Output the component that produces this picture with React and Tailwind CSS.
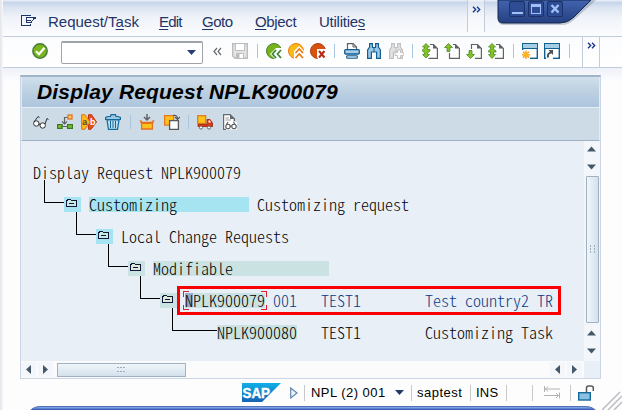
import React from "react";

const ui = "font-['Liberation_Sans',Arial,sans-serif]";

function Icon({ w = 16, h = 16, children, className = "" }) {
  return (
    <svg width={w} height={h} viewBox={`0 0 ${w} ${h}`} fill="none" className={`shrink-0 ${className}`}>
      {children}
    </svg>
  );
}

function Sep({ className = "" }) {
  return <div className={`h-[14px] w-px shrink-0 bg-[#a9c6e0] ${className}`} />;
}

/* Half-width Latin text, one cell is 8px wide */
function Mono({ text, cells, className = "", children }) {
  return (
    <div
      className={`h-4 shrink-0 whitespace-pre font-['Noto_Sans_CJK_JP','Liberation_Mono',monospace] text-[16px] leading-[14px] font-light [font-variant-ligatures:none] [font-feature-settings:'hwid','liga'_0] ${className}`}
      style={{ width: (cells ?? text.length) * 8 }}
    >
      {children ?? text}
    </div>
  );
}

function Folder({ className = "" }) {
  return (
    <div className={`h-[15px] w-[17px] shrink-0 ${className}`}>
      <svg width="17" height="15" viewBox="0 0 17 15" fill="none" shapeRendering="crispEdges">
        <path d="M2.500 9.500V3.500H3.500V2.500H6.500L7.500 3.500H12.500V9.500Z" fill="#e9efd6" fillOpacity=".5" stroke="#15153a" />
        <path d="M5 6.500H10" stroke="#15153a" />
      </svg>
    </div>
  );
}

function Branch({ className }) {
  return <div className={`h-[23px] shrink-0 border-b border-l border-black ${className}`} />;
}

function Arrow({ dir }) {
  const d = {
    up: "M3.5 10L8 5L12.500 10Z",
    down: "M3.5 6L8 11L12.500 6Z",
    left: "M10.500 3.5L5.500 8L10.500 12.500Z",
    right: "M5.500 3.5L10.500 8L5.500 12.500Z",
  }[dir];
  return (
    <div className="size-[15px] shrink-0 bg-[#f3f6fa]">
      <Icon w={15} h={15}>
        <path d={d} fill="#465868" transform="translate(-.5 -.5)" />
      </Icon>
    </div>
  );
}

function PageIcon({ kind }) {
  const arrow = {
    first: "M4 .5L7.500 4H5.500V6.500H8V8L5.500 10V11.500H7.500L4 15L.5 11.500H2.500V10L.5 8V7L2.500 5V4H.5Z",
    prev: "M4.500 .5L8.500 4.500H6V8.500H3V4.500H.5Z",
    next: "M4.500 15.500L8.500 11.500H6V7.500H3V11.500H.5Z",
    last: "M4 .5L7.500 4H5.500V6L8 8V9H5.500V11.500H7.500L4 15.500L.5 11.500H2.500V9H.5V8L2.500 6V4H.5Z",
  }[kind];
  const page = {
    first: "M8 1.500H11.500L15.400 5.400V15.400H6.500",
    prev: "M9 1.500H11.500L15.400 5.400V15.400H5.500V10",
    next: "M5.500 6V1.500H11.500L15.400 5.400V15.400H9",
    last: "M8 1.500H11.500L15.400 5.400V15.400H7",
  }[kind];
  return (
    <Icon>
      <path d={page} stroke="#5f6368" strokeWidth="1.200" />
      <path d="M11 1V5.500H15.500Z" fill="#5f6368" />
      <path d={arrow} fill="#84c225" stroke="#4b8a24" strokeWidth=".8" />
    </Icon>
  );
}

function Binoculars({ stroke, fill, plus }) {
  return (
    <Icon>
      <path
        d="M3.600 .6H6.400V4.500H9.600V.6H12.400V4L14.400 7V15.400H10.600V9H5.400V15.400H1.600V7L3.600 4Z"
        fill={fill}
        stroke={stroke}
        strokeWidth="1.200"
      />
      <path d="M8 4.500V9" stroke={stroke} />
      {plus && <path d="M9.500 7H12.500V9.500H15.300V12.500H12.500V15.300H9.500V12.500H7V9.500H9.500Z" fill="#fff" stroke={stroke} />}
    </Icon>
  );
}

function MenuBar() {
  return (
    <div className="flex h-[37px] shrink-0 border-b border-[#c3ccdf] bg-[linear-gradient(#e4ecf8_0px,#e4ecf8_1px,#c5d4e9_2px,#dce5f2_8px,#f0f3f9_18px,#fbfcfe_36px)] text-[15px] leading-[18px] text-[#1f3468]">
      <div className="flex w-[467px] pt-[13px] pl-[21px]">
        <Icon w={16} h={14} className="mt-px">
          <path d="M9.500 2V1.500H.500V11.500H9.500V9.500M4.500 3.500H14.500V4.500H13L10 8.500H5.500V3.500M6 6.500H10" stroke="#1f3468" shapeRendering="crispEdges" />
        </Icon>
        <div className="ml-[11px] w-[111px]">Request/T<u className="underline-offset-2">a</u>sk</div>
        <div className="w-[43px] tracking-[-.8px]"><u className="underline-offset-2">E</u>dit</div>
        <div className="w-[53px] tracking-[-.5px]"><u className="underline-offset-2">G</u>oto</div>
        <div className="w-[63px] tracking-[-.35px]"><u className="underline-offset-2">O</u>bject</div>
        <div className="ml-px tracking-[-.25px]">Utilitie<u className="underline-offset-2">s</u></div>
      </div>
      <div className="h-8 w-[18px] shrink-0 border-x border-[#c3ccda] bg-[#ffffff60] pt-[6px] pl-[3px]">
        <Icon w={10} h={7} className="ml-px">
          <path d="M1 .7L3.7 3.5L1 6.3M5 .7L7.7 3.5L5 6.3" stroke="#1d3a8c" strokeWidth="1.4" />
        </Icon>
      </div>
      <svg width="108" height="30" viewBox="0 0 108 30" className="ml-[9px] shrink-0">
        <defs>
          <linearGradient id="cap" x1="0" y1="0" x2="0" y2="1">
            <stop offset="0" stopColor="#4263ae" />
            <stop offset="1" stopColor="#244081" />
          </linearGradient>
        </defs>
        <path d="M4 0V19Q4 25 10 25H68Q75 25 81 19L102 0Z" fill="#66758c" opacity=".35" />
        <path d="M4 0V18Q4 23 9 23H66Q74 23 80 17L97 0Z" fill="url(#cap)" stroke="#152650" />
        <g fill="#2e4c94" stroke="#1a3268">
          <rect x="15.500" y="1.500" width="15" height="15" rx="1.500" />
          <rect x="34.500" y="1.500" width="15" height="15" rx="1.500" />
          <rect x="53.500" y="1.500" width="15" height="15" rx="1.500" />
        </g>
        <g stroke="#a3c0fa" fill="none">
          <path d="M18 13H29" strokeWidth="2" />
          <rect x="37.500" y="4.500" width="9" height="9" />
          <path d="M37 5.500H47" strokeWidth="3" />
          <path d="M57.500 5L64.500 12.500M64.500 5L57.500 12.500" strokeWidth="2.400" />
        </g>
      </svg>
    </div>
  );
}

function StandardToolbar() {
  return (
    <div className="flex h-[31px] shrink-0 items-center border-b border-[#c3ccdf] bg-[linear-gradient(#fbfcfe,#ffffff)] pl-8">
      <Icon className="-mt-0.5">
        <circle cx="8" cy="8" r="7.2" fill="#7ab51d" stroke="#477a38" strokeWidth="1.4" />
        <path d="M4 8.300L7 11.200L12.500 4.800" stroke="#fff" strokeWidth="2.200" />
      </Icon>
      <div className="ml-[13px] flex h-[23px] w-[142px] shrink-0 items-center justify-end rounded-[2px] border border-t-2 border-[#a0a4aa] bg-white pr-1.5">
        <Icon w={9} h={5}><path d="M0 0H9L4.500 5Z" fill="#243d78" /></Icon>
      </div>
      <Icon w={9} h={9} className="-mt-0.5 ml-[10px]">
        <path d="M4 1L1 4.500L4 8M8 1L5 4.500L8 8" stroke="#666a70" strokeWidth="1.200" />
      </Icon>
      <div className="-mt-0.5 flex items-center">
        <Icon className="ml-[10px]">
          <path d="M.7 .7H15.300V15.300H3L.7 13Z" fill="#e4e4e4" stroke="#bdbdbd" strokeWidth="1.400" />
          <path d="M3.500 1V7.500H12.500V1" fill="#fff" stroke="#bdbdbd" />
          <path d="M4.500 15V10.500H11.500V15" fill="#fff" stroke="#bdbdbd" />
          <path d="M5 11H7.500V15H5Z" fill="#bdbdbd" />
        </Icon>
        <Sep className="ml-[9px]" />
        <Icon className="ml-2">
          <circle cx="8" cy="8" r="7.500" fill="#76b31c" stroke="#4d802f" />
          <path d="M16 5H10L4 11L9 16H16Z" fill="#fff" />
          <path d="M10 7L6.500 11L10 15M15 7L11.500 11L15 15" stroke="#3d8731" strokeWidth="1.800" />
        </Icon>
        <Icon className="ml-1.5">
          <circle cx="8" cy="8" r="7.500" fill="#fdb913" stroke="#e97b16" />
          <path d="M11 3L6 8V16H16V8Z" fill="#fff" />
          <path d="M7.500 10L11.300 6L15 10M7.500 15L11.300 11L15 15" stroke="#e97b16" strokeWidth="1.800" />
        </Icon>
        <Icon className="ml-1.5">
          <circle cx="8" cy="8" r="7.500" fill="#d8520e" stroke="#b23b17" />
          <path d="M7 6H16V16H8L7 14Z" fill="#fff" />
          <path d="M9 8L14.500 14.500M14.500 8L9 14.500" stroke="#b82712" strokeWidth="2" />
        </Icon>
        <Sep className="ml-2" />
        <Icon className="ml-[9px]">
          <path d="M3.500 6V.6H9L12.500 4V7" fill="#fff" stroke="#5f6368" strokeWidth="1.200" />
          <path d="M9 .5V4H12.500" stroke="#5f6368" />
          <rect x=".700" y="6.700" width="14.600" height="4.300" rx="1" fill="#a6cfea" stroke="#12598c" strokeWidth="1.300" />
          <rect x="2.700" y="12.800" width="10.600" height="2.500" rx=".700" fill="#c4e2f3" stroke="#12598c" strokeWidth="1.100" />
        </Icon>
        <div className="ml-1.5 flex gap-1.5">
          <Binoculars stroke="#145f94" fill="#9cc9e6" />
          <Binoculars stroke="#c2c2c2" fill="#e2e2e2" plus />
        </div>
        <Sep className="ml-2" />
        <div className="ml-[9px] flex gap-1.5">
          <PageIcon kind="first" />
          <PageIcon kind="prev" />
          <PageIcon kind="next" />
          <PageIcon kind="last" />
        </div>
        <Sep className="ml-[9px]" />
        <div className="ml-2 flex gap-1.5">
          <Icon>
            <rect x=".700" y=".700" width="14.600" height="14.600" fill="#fff" stroke="#11618f" strokeWidth="1.400" />
            <path d="M1 1H15V5H1Z" fill="#a6cde3" /><path d="M0 5.500H16" stroke="#11618f" />
            <path d="M0 7H8V16H0Z" fill="#fff" />
            <path d="M4 7.500V16M0 11.800H8.300M1 8.800L7 14.800M7 8.800L1 14.800" stroke="#f79419" strokeWidth="1.300" />
            <circle cx="4" cy="11.800" r="2.500" fill="#fbb618" />
          </Icon>
          <Icon>
            <rect x=".700" y=".700" width="14.600" height="14.600" fill="#fff" stroke="#11618f" strokeWidth="1.400" />
            <path d="M1 1H15V5H1Z" fill="#a6cde3" /><path d="M0 5.500H16" stroke="#11618f" />
            <path d="M3 8H9V16H2Z" fill="#fff" />
            <path d="M4 14.500Q3 10 7.500 9.500" stroke="#4a4e52" strokeWidth="2" /><path d="M4.500 7H9V12Z" fill="#4a4e52" />
          </Icon>
        </div>
        <Sep className="ml-[9px]" />
      </div>
      <div className="ml-3 h-[30px] w-[18px] shrink-0 border-x border-[#c3ccda] pt-[5px] pl-1">
        <Icon w={10} h={7}>
          <path d="M1 .7L3.700 3.500L1 6.300M5 .7L7.700 3.500L5 6.300" stroke="#1d3a8c" strokeWidth="1.400" />
        </Icon>
      </div>
    </div>
  );
}

function AppToolbar() {
  return (
    <div className="flex h-[34px] shrink-0 items-start border border-t-[#e6eef5] border-r-[#e4edf4] border-b-[#9fb1c4] border-l-[#e4edf4] bg-[#cddbe6] pt-[6px] pl-[11px]">
      <Icon>
        <g stroke="#1c1c1c" fill="#fff" strokeWidth=".9">
          <circle cx="3.300" cy="9.500" r="2.700" /><circle cx="9.700" cy="11.500" r="2.700" />
          <path d="M1 8L5 2.500L6.500 3.500M5.800 10L7.200 10.500M12 10L14 4.500L15.500 5.500" fill="none" />
        </g>
      </Icon>
      <Icon className="ml-2">
        <path d="M10.500 3.500H7.500V10M5 7.500L7.500 10L10 7.500" stroke="#5f6368" strokeWidth="1.200" />
        <rect x="11" y="1" width="4" height="4" fill="#fcd068" stroke="#e26a12" strokeWidth="1.200" />
        <path d="M5 12.500H11" stroke="#5f6368" />
        <rect x=".600" y="10.600" width="4.500" height="3.800" fill="#80bd2b" stroke="#397a29" strokeWidth="1.200" />
        <rect x="10.600" y="10.600" width="4.800" height="3.800" fill="#80bd2b" stroke="#397a29" strokeWidth="1.200" />
      </Icon>
      <Icon className="ml-2">
        <path d="M7.500 .7H10.500L15.500 8L10 15.300H7.500Z" fill="#e94e1b" stroke="#ba3517" />
        <path d="M.6 .7H4L9 8L4 15.300H.6Z" fill="#fcb81c" stroke="#e5761b" />
        <text x="1.300" y="11" fontSize="9" fontWeight="bold" fill="#5a4c22" fontFamily="Liberation Sans">a</text>
        <text x="9" y="11" fontSize="9" fontWeight="bold" fill="#fff" fontFamily="Liberation Sans">b</text>
      </Icon>
      <Icon className="ml-2">
        <path d="M2 6H14L12.500 15.300H3.500Z" fill="#b9dff2" stroke="#17689a" strokeWidth="1.200" />
        <path d="M.6 5.500V3.500L3 2.500H5.500L6 .6H10.500L11 2.500H13L15.400 3.500V5.500Z" fill="#9bc9e3" stroke="#17689a" strokeWidth="1.200" />
        <path d="M5.500 7V14M8 7V14M10.500 7V14" stroke="#17689a" />
      </Icon>
      <Sep className="mt-px ml-[9px]" />
      <Icon className="ml-2">
        <path d="M8 0V5.500M5 3L8 6L11 3" stroke="#5f6368" strokeWidth="1.500" />
        <path d="M3 7.500L.7 6.500M13 7.500L15.300 6.500M2.600 8.500H13.400V15H2.600Z" fill="#fcc31c" stroke="#e8701a" strokeWidth="1.300" />
        <path d="M1 8L4 9.500H12L15 8" stroke="#e8701a" />
      </Icon>
      <Icon className="ml-[9px]">
        <rect x=".600" y="1.600" width="9" height="9.500" fill="#fdbf1b" stroke="#e5791a" strokeWidth="1.200" />
        <rect x="5.600" y="6.600" width="8.800" height="8.800" fill="#fff" stroke="#55595d" strokeWidth="1.300" />
        <path d="M9 1.500Q13.500 .5 13.500 5M11 3L13.500 5.500L16 3" stroke="#55595d" strokeWidth="1.200" />
      </Icon>
      <Sep className="mt-px ml-2" />
      <Icon className="ml-2">
        <path d="M1 12.500V10.500H10V5.500H13L15.400 9V12.500Z" fill="#d83a17" stroke="#ae2a12" />
        <path d="M11.500 6.500H13L14 8.500H11.500Z" fill="#fff" />
        <rect x=".700" y="1.700" width="8" height="7.800" fill="#fcc31c" stroke="#e17518" strokeWidth="1.200" />
        <g fill="#fff" stroke="#65686b"><circle cx="4" cy="13.500" r="1.600" /><circle cx="12" cy="13.500" r="1.600" /></g>
      </Icon>
      <Icon className="ml-[9px]">
        <path d="M1.600 15.400V.6H7L11 4.500V8H15V15.400Z" fill="#fff" />
        <path d="M4 15.400H1.600V.6H8L12.500 5V7" stroke="#66696c" strokeWidth="1.200" />
        <path d="M8 0V5H13Z" fill="#66696c" /><path d="M3.500 4H7M3.500 6H9" stroke="#9c9c9c" />
        <g stroke="#55585b" strokeWidth="1.100"><circle cx="6" cy="12.500" r="2.200" /><circle cx="12" cy="12.500" r="2.200" /><path d="M4.500 10.500L6 8M13 10.500L11.500 8M8 12H10" /></g>
      </Icon>
    </div>
  );
}

function Tree() {
  return (
    <div className="min-w-0 flex-1 pt-[24px] text-black">
      <div className="h-[15px] pl-3">
        <Mono text="Display Request NPLK900079" />
      </div>
      <div className="flex h-8 pl-[23px]">
        <Branch className="w-5" />
        <Folder className="mt-[17px] bg-[#a6e4f2]" />
        <div className="mt-[17px] ml-2 h-[15px] bg-[#a6e4f2]"><Mono text="Customizing" cells={20} /></div>
        <Mono text="Customizing request" className="mt-[17px] ml-2" />
      </div>
      <div className="flex h-8 pl-[55px]">
        <Branch className="w-5" />
        <Folder className="mt-[17px] bg-[#a6e4f2]" />
        <Mono text="Local Change Requests" className="mt-[17px] ml-2" />
      </div>
      <div className="flex h-8 pl-[87px]">
        <Branch className="w-5" />
        <Folder className="mt-[17px] bg-[#cae3e2]" />
        <div className="mt-[17px] ml-2 h-[15px] bg-[#cae3e2]"><Mono text="Modifiable" cells={22} /></div>
      </div>
      <div className="relative flex h-8 pl-[119px]">
        <Branch className="w-5" />
        <Folder className="mt-[17px] bg-[#cae3e2]" />
        <div className="relative mt-[17px] ml-2 h-[15px] bg-[#cae3e2]">
          <Mono cells={10}><span className="bg-[linear-gradient(#94add0,#94add0)] bg-[length:100%_14px] bg-center bg-no-repeat">N</span>PLK900079</Mono>
          <svg width="84" height="19" viewBox="0 0 84 19" fill="none" className="absolute -top-[2px] -left-[2px]" shapeRendering="crispEdges">
            <path d="M6 .5H.5V5.500M78 .5H83.500V5.500M6 18.500H.5V13.500M78 18.500H83.500V13.500" stroke="#e01f2d" />
          </svg>
        </div>
        <Mono text="001" cells={6} className="mt-[17px] ml-2 text-[#083b82]" />
        <Mono text="TEST1" cells={13} className="mt-[17px] text-[#083b82]" />
        <Mono text="Test country2 TR" className="mt-[17px] text-[#083b82]" />
        <div className="absolute top-[10px] left-[156px] h-[29px] w-[384px] border-[3px] border-[#fb0000]" />
      </div>
      <div className="flex h-8 pl-[151px]">
        <Branch className="w-[45px]" />
        <div className="mt-[17px] h-[15px] bg-[#cae3e2]"><Mono text="NPLK900080" /></div>
        <Mono text="TEST1" cells={13} className="mt-[17px] ml-6" />
        <Mono text="Customizing Task" className="mt-[17px]" />
      </div>
    </div>
  );
}

function Grip({ vertical }) {
  return (
    <svg width="9" height="9" viewBox="0 0 9 9" fill="#9aabb9" shapeRendering="crispEdges" className={vertical ? "rotate-90" : ""}>
      <path d="M0 2h2v1h-2zM3 2h2v1h-2zM6 2h2v1h-2zM0 6h2v1h-2zM3 6h2v1h-2zM6 6h2v1h-2z" />
    </svg>
  );
}

function StatusBar() {
  return (
    <div className={`flex h-[27px] shrink-0 items-center bg-[#fdfdfe] pl-[242px] text-[13px] leading-4 text-black ${ui}`}>
      <svg width="39" height="19" viewBox="0 0 39 19" className="shrink-0">
        <defs>
          <linearGradient id="sap" x1="0" y1="0" x2="0" y2="1">
            <stop offset="0" stopColor="#10afe8" /><stop offset="1" stopColor="#1762b2" />
          </linearGradient>
        </defs>
        <path d="M0 0H39L20 19H0Z" fill="url(#sap)" />
        <text x=".5" y="14.500" fontFamily="Liberation Sans" fontWeight="bold" fontSize="14.500" textLength="27.500" lengthAdjust="spacingAndGlyphs" fill="#fff" stroke="#fff" strokeWidth=".4">SAP</text>
      </svg>
      <Icon w={8} h={12} className="ml-[9px]">
        <path d="M.7 1L7 6L.7 11Z" fill="#edf4fa" stroke="#6288ab" strokeWidth="1.200" />
      </Icon>
      <div className="ml-1.5 h-4 w-px shrink-0 bg-[#c9c9cc]" />
      <div className="ml-1.5 w-[77px] shrink-0 tracking-[.45px] whitespace-nowrap">NPL (2) 001</div>
      <Icon w={9} h={5} className="ml-[7px]"><path d="M0 0H9L4.500 5Z" fill="#26386b" /></Icon>
      <div className="ml-[7px] h-4 w-px shrink-0 bg-[#c9c9cc]" />
      <div className="ml-[5px] w-[48px] shrink-0 tracking-[.5px]">saptest</div>
      <div className="ml-[5px] h-4 w-px shrink-0 bg-[#c9c9cc]" />
      <div className="ml-[5px] w-6 shrink-0 tracking-[.25px]">INS</div>
      <div className="ml-1.5 h-4 w-px shrink-0 bg-[#c9c9cc]" />
      <div className="ml-[25px] h-4 w-px shrink-0 bg-[#c9c9cc]" />
      <Icon w={16} h={13} className="ml-[11px]">
        <path d="M.5 0V6M1 3H16M4 .5L1.500 3L4 5.500M15.500 6.500V12.500M0 9.500H15M12 7L14.500 9.500L12 12" stroke="#b2b2b2" />
      </Icon>
      <div className="ml-[10px] h-4 w-px shrink-0 bg-[#c9c9cc]" />
      <Icon w={17} h={16} className="ml-[7px]">
        <path d="M8.500 7V3Q8.500 1 10.500 1H13Q15.300 1 15.300 3V6" stroke="#55585c" strokeWidth="1.500" />
        <rect x=".700" y="7.700" width="11.600" height="7.300" fill="#8bc1e2" stroke="#17689a" strokeWidth="1.400" />
      </Icon>
    </div>
  );
}

export default function App() {
  return (
    <div className={`relative flex h-[410px] w-[622px] flex-col overflow-hidden bg-[#fdfdfe] ${ui}`}>
      <MenuBar />
      <StandardToolbar />
      <div className="flex h-[311px] shrink-0 flex-col bg-[linear-gradient(#eef1f8,#fdfdfe_14px)] pt-[7px] pr-[21px] pl-5">
        <div className="flex h-[304px] flex-col border border-t-2 border-[#cbd5e5] border-t-[#a0b4c9] bg-[#e8eff6]">
          <div className="h-[30px] shrink-0 border-x border-[#e2ebf3] bg-[linear-gradient(#d0dfea,#bcd0e2_50%,#adc5dd)] pt-px pl-[15px] text-[21px] leading-[28px] font-bold tracking-[.17px] whitespace-nowrap text-black italic">
            Display Request NPLK900079
          </div>
          <AppToolbar />
          <div className="flex h-[220px] shrink-0">
            <Tree />
            <div className="flex w-[16px] shrink-0 flex-col items-start bg-[#f4f5f8] pt-px">
              <Arrow dir="up" />
              <div className="mt-0.5"><Arrow dir="down" /></div>
              <div className="mt-0.5 flex h-[147px] w-[13px] items-center justify-center self-center rounded-[1px] border border-[#9fb1c2] bg-[linear-gradient(90deg,#f0f6fa,#d4e1ec)]"><Grip vertical /></div>
              <div className="mt-[3px]"><Arrow dir="up" /></div>
              <div className="mt-0.5"><Arrow dir="down" /></div>
            </div>
          </div>
          <div className="flex h-[17px] shrink-0 items-center bg-[#fbfbfc]">
            <Arrow dir="left" />
            <div className="ml-0.5"><Arrow dir="right" /></div>
            <div className="ml-1 flex h-[14px] w-[129px] items-center justify-center border border-[#9fb1c2] bg-[linear-gradient(#f0f6fa,#d4e1ec)]"><Grip /></div>
            <div className="ml-auto"><Arrow dir="left" /></div>
            <div className="ml-0.5"><Arrow dir="right" /></div>
            <div className="ml-0.5 h-full w-4 bg-[#e8eff6]" />
          </div>
        </div>
      </div>
      <StatusBar />
      <div className="mr-[22px] ml-[26px] h-[14px] shrink-0 rounded-t-[14px] border-t border-[#5472b8] bg-[linear-gradient(#7ba0e6_0px,#7ba0e6_1px,#3d62b5_2px,#3d62b5_100%)]" />
      <svg width="20" height="20" viewBox="0 0 20 20" className="absolute right-0 bottom-0" stroke="#bcbdc2" strokeWidth="1.500">
        <path d="M0 20L18 2M6 20L20 6M12 20L20 12" />
      </svg>
      <div className="absolute top-0 left-0 h-full w-[3px] bg-[linear-gradient(90deg,#e3e4e8,#f7f7fa)]" />
    </div>
  );
}
